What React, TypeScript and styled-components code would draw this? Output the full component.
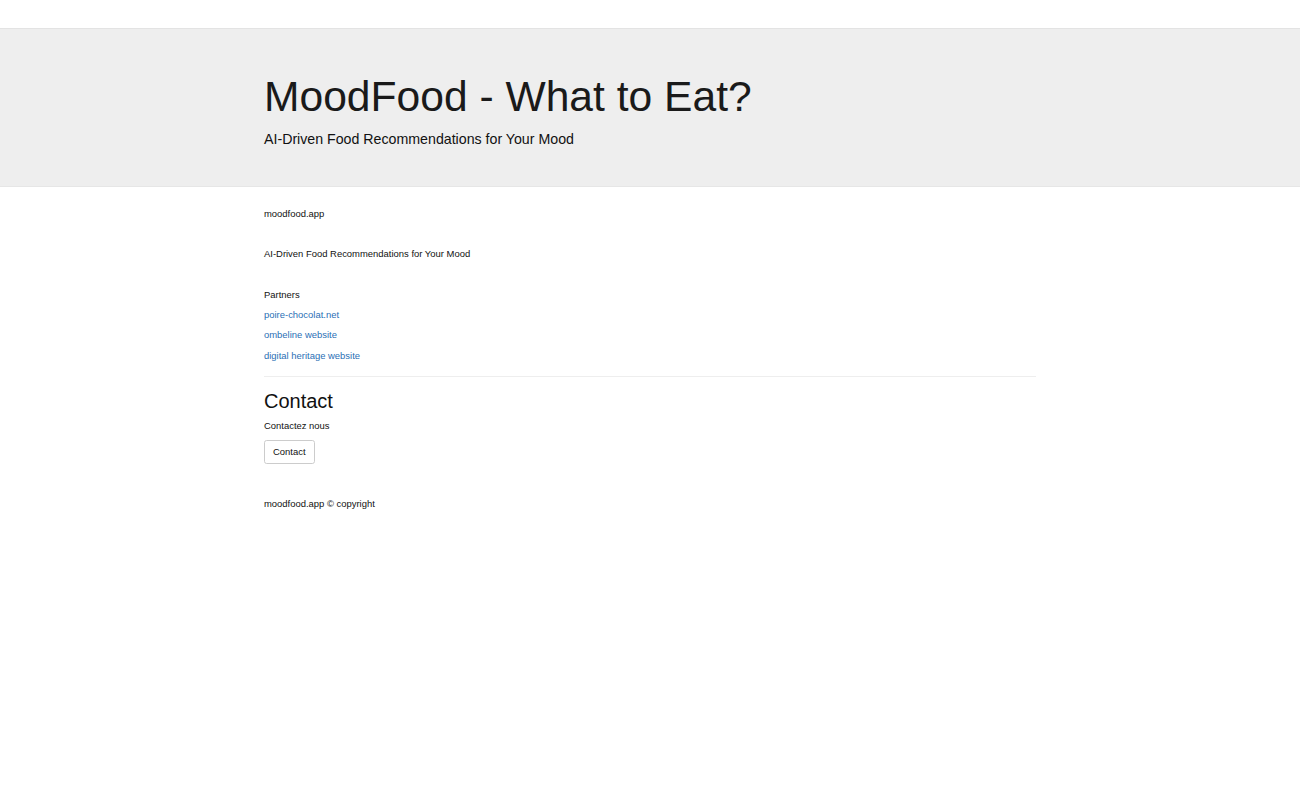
import React from 'react'
import styled, { createGlobalStyle } from 'styled-components'

const GlobalStyle = createGlobalStyle`
  * { box-sizing: border-box; }
  html, body {
    margin: 0;
    padding: 0;
    background: #fff;
    font-family: "Liberation Sans", Arial, sans-serif;
    font-size: 9.45px;
    line-height: 13.6px;
    color: #111;
  }
`

const TopBar = styled.div`
  height: 29px;
  border-bottom: 1px solid #e3e3e3;
  background: #fff;
`

const Jumbotron = styled.header`
  background: #eee;
  padding: 32px 0 27px;
  margin-bottom: 20px;
  border-bottom: 1px solid #e6e6e6;
`

const Container = styled.div`
  width: 772px;
  margin: 0 auto;
`

const Title = styled.h1`
  margin: 12px 0 10px;
  font-size: 42.6px;
  line-height: 46px;
  font-weight: 400;
  color: #1a1a1a;
`

const Lead = styled.p`
  margin: 0 0 10px;
  font-size: 14.2px;
  line-height: 20px;
  color: #111;
`

const Text = styled.p<{ $gap?: number }>`
  margin: 0 0 ${p => p.$gap ?? 6.67}px;
`

const LinkItem = styled.a`
  display: block;
  margin: 0 0 6.9px;
  color: #2a6fb5;
  text-decoration: none;
`

const Rule = styled.hr`
  margin: 13.33px 0;
  border: 0;
  border-top: 1px solid #eee;
`

const Heading = styled.h2`
  margin: 0 0 7.5px;
  font-size: 20px;
  line-height: 22px;
  font-weight: 400;
  color: #111;
`

const Button = styled.button`
  display: inline-block;
  padding: 4.5px 8px;
  font-family: inherit;
  font-size: 9.45px;
  line-height: 13.6px;
  color: #111;
  background: #fff;
  border: 1px solid #ccc;
  border-radius: 2.67px;
  cursor: pointer;
`

const Footer = styled.footer`
  margin-top: 33px;
`

export default function App() {
  return (
    <>
      <GlobalStyle />
      <TopBar />
      <Jumbotron>
        <Container>
          <Title>MoodFood - What to Eat?</Title>
          <Lead>AI-Driven Food Recommendations for Your Mood</Lead>
        </Container>
      </Jumbotron>
      <Container>
        <Text $gap={26.67}>moodfood.app</Text>
        <Text $gap={26.67}>AI-Driven Food Recommendations for Your Mood</Text>
        <Text>Partners</Text>
        <LinkItem href="#">poire-chocolat.net</LinkItem>
        <LinkItem href="#">ombeline website</LinkItem>
        <LinkItem href="#">digital heritage website</LinkItem>
        <Rule />
        <Heading>Contact</Heading>
        <Text>Contactez nous</Text>
        <Button>Contact</Button>
        <Footer>moodfood.app © copyright</Footer>
      </Container>
    </>
  )
}
